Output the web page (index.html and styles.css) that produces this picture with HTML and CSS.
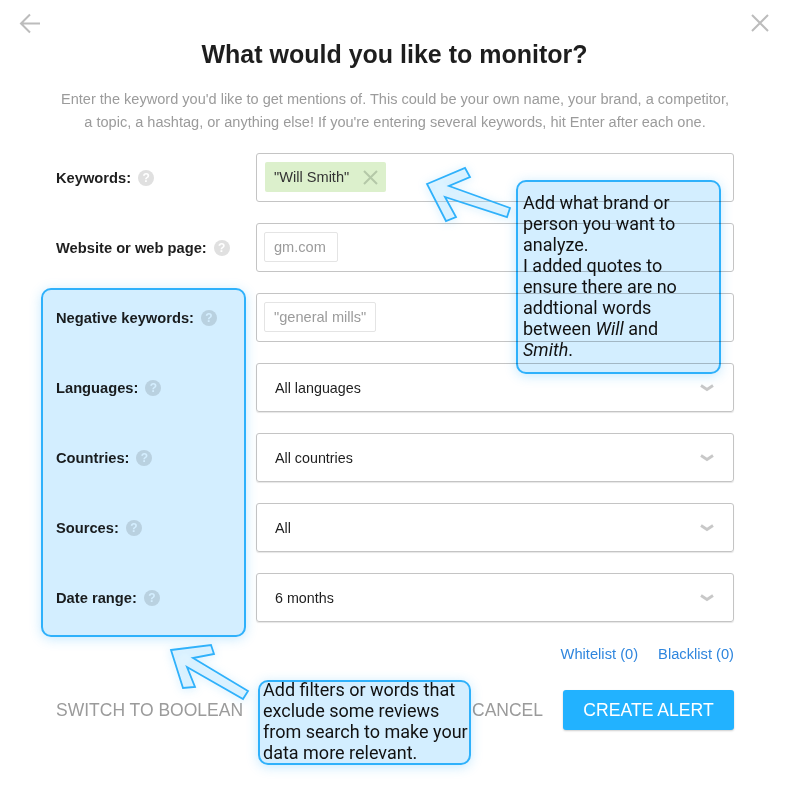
FILE: index.html
```html
<!DOCTYPE html>
<html>

<head>
    <meta charset="UTF-8">
    <title>What would you like to monitor?</title>
    <link rel="stylesheet" href="styles.css">
</head>

<body>
    <div class="page">
        <div class="top_bar">
            <svg class="icon_back" width="22" height="21" viewBox="0 0 22 21">
                <path d="M21 10.5H2M11 1.5L2 10.5L11 19.5" />
            </svg>
            <svg class="icon_close" width="18" height="18" viewBox="0 0 18 18">
                <path d="M1 1L17 17M17 1L1 17" />
            </svg>
        </div>

        <h1 class="title">What would you like to monitor?</h1>
        <p class="intro">Enter the keyword you'd like to get mentions of. This could be your own name, your brand, a competitor,<br>a topic, a hashtag, or anything else! If you're entering several keywords, hit Enter after each one.</p>

        <div class="form">
            <div class="row">
                <div class="label">Keywords: <span class="help">?</span></div>
                <div class="field">
                    <span class="chip">"Will Smith"
                        <svg class="chip_x" width="15" height="15" viewBox="0 0 15 15">
                            <path d="M1 1L14 14M14 1L1 14" />
                        </svg>
                    </span>
                </div>
            </div>
            <div class="row">
                <div class="label">Website or web page: <span class="help">?</span></div>
                <div class="field"><span class="tag">gm.com</span></div>
            </div>
            <div class="row">
                <div class="label">Negative keywords: <span class="help">?</span></div>
                <div class="field"><span class="tag">"general mills"</span></div>
            </div>
            <div class="row">
                <div class="label">Languages: <span class="help">?</span></div>
                <div class="field select">All languages
                    <svg class="chevron" width="14" height="8" viewBox="0 0 14 8"><path d="M1 1.5L7 5.5L13 1.5" /></svg>
                </div>
            </div>
            <div class="row">
                <div class="label">Countries: <span class="help">?</span></div>
                <div class="field select">All countries
                    <svg class="chevron" width="14" height="8" viewBox="0 0 14 8"><path d="M1 1.5L7 5.5L13 1.5" /></svg>
                </div>
            </div>
            <div class="row">
                <div class="label">Sources: <span class="help">?</span></div>
                <div class="field select">All
                    <svg class="chevron" width="14" height="8" viewBox="0 0 14 8"><path d="M1 1.5L7 5.5L13 1.5" /></svg>
                </div>
            </div>
            <div class="row">
                <div class="label">Date range: <span class="help">?</span></div>
                <div class="field select">6 months
                    <svg class="chevron" width="14" height="8" viewBox="0 0 14 8"><path d="M1 1.5L7 5.5L13 1.5" /></svg>
                </div>
            </div>
        </div>

        <div class="lists">
            <a class="list_link">Whitelist (0)</a>
            <a class="list_link">Blacklist (0)</a>
        </div>

        <div class="actions">
            <span class="text_button">SWITCH TO BOOLEAN</span>
            <span class="right_actions">
                <span class="text_button">CANCEL</span>
                <span class="button_create">CREATE ALERT</span>
            </span>
        </div>

        <!-- annotations drawn over the form -->
        <div class="note_panel"></div>
        <div class="note note_top">Add what brand or person you want to analyze.<br>I added quotes to ensure there are no addtional words between <i>Will</i> and <i>Smith</i>.</div>
        <div class="note note_bottom"><div class="note_bottom_text">Add filters or words that exclude some reviews from search to make your data more relevant.</div></div>
        <svg class="note_arrows" width="785" height="788" viewBox="0 0 785 788">
            <polygon points="427,184 465,168 470,177 449,186 510,208 507,217 445,197 456,217 446,221" />
            <polygon points="171,650 211,645 214,654 193,658 248,691 243,699 187,667 195,687 183,688" />
        </svg>
    </div>
</body>

</html>
```

FILE: styles.css
```css
body {
    margin: 0;
    background-color: white;
    color: #1e1e1e;
    font-family: "Liberation Sans", Arial, sans-serif;
    font-size: 14.3px;
}

.page {
    position: relative;
    width: 785px;
    height: 788px;
    overflow: hidden;
}

.top_bar {
    display: flex;
    justify-content: space-between;
    padding: 13px 16px 0 19px;
}

.icon_back path,
.icon_close path {
    fill: none;
    stroke: #bcbcbc;
    stroke-width: 2;
}

.icon_close {
    margin-top: 1px;
}

.title {
    margin: 6px 0 0;
    padding-left: 4px;
    font-size: 25px;
    line-height: 29px;
    text-align: center;
    color: #1e1e1e;
}

.intro {
    margin: 19px 0 0;
    padding-left: 5px;
    font-size: 14.55px;
    line-height: 23px;
    text-align: center;
    color: #9b9b9b;
}

.form {
    display: flex;
    flex-direction: column;
    gap: 21px;
    margin: 19px 51px 0 56px;
}

.row {
    display: flex;
    align-items: center;
}

.label {
    display: flex;
    align-items: center;
    gap: 7px;
    width: 200px;
    font-size: 14.7px;
    font-weight: bold;
}

.help {
    width: 16px;
    height: 16px;
    border-radius: 50%;
    background-color: #e0e0e0;
    color: white;
    font-size: 12px;
    line-height: 16px;
    text-align: center;
}

.field {
    display: flex;
    align-items: flex-start;
    box-sizing: border-box;
    flex: 1;
    height: 49px;
    padding: 8px 7px 0 8px;
    border: 1px solid #c4c4c4;
    border-radius: 3px;
}

.select {
    align-items: center;
    justify-content: space-between;
    padding: 0 19px 0 18px;
    box-shadow: 0 1px 1px rgba(0, 0, 0, 0.1);
}

.chevron path {
    fill: none;
    stroke: #c8c8c8;
    stroke-width: 2.8;
}

.chip {
    display: flex;
    align-items: center;
    gap: 14px;
    height: 30px;
    padding: 0 8px 0 9px;
    background-color: #dcf0cc;
    border-radius: 2px;
    color: #333;
    font-size: 14.6px;
}

.chip_x path {
    fill: none;
    stroke: #b4c8a8;
    stroke-width: 2;
}

.tag {
    box-sizing: border-box;
    min-width: 74px;
    height: 30px;
    margin-left: -1px;
    padding: 0 9px;
    border: 1px solid #e4e4e4;
    border-radius: 2px;
    font-size: 14.6px;
    line-height: 28px;
    color: #9b9b9b;
}

.lists {
    display: flex;
    justify-content: flex-end;
    gap: 20px;
    margin: 24px 51px 0 0;
    font-size: 14.7px;
    line-height: 16px;
}

.list_link {
    color: #2f86de;
}

.actions {
    display: flex;
    justify-content: space-between;
    align-items: center;
    margin: 28px 51px 0 56px;
}

.right_actions {
    display: flex;
    align-items: center;
    gap: 20px;
}

.text_button {
    font-size: 17.5px;
    color: #9b9b9b;
}

.button_create {
    width: 171px;
    height: 40px;
    background-color: #22b2ff;
    border-radius: 3px;
    box-shadow: 0 1px 2px rgba(0, 0, 0, 0.2);
    color: white;
    font-size: 17.6px;
    line-height: 40px;
    text-align: center;
}

.note_panel,
.note {
    position: absolute;
    box-sizing: border-box;
    border: 2px solid #2fb1fb;
    border-radius: 10px;
    background-color: #d3eeff;
    box-shadow: 0 2px 12px rgba(47, 177, 251, 0.28);
    mix-blend-mode: multiply;
}

.note_panel {
    left: 41px;
    top: 288px;
    width: 205px;
    height: 349px;
}

.note {
    color: #111;
    font-family: Roboto, sans-serif;
    font-size: 18px;
    line-height: 21px;
}

.note_top {
    left: 516px;
    top: 180px;
    width: 205px;
    height: 194px;
    padding: 10px 12px 0 5px;
}

.note_bottom {
    left: 258px;
    top: 680px;
    width: 213px;
    height: 85px;
    padding: 0 0 0 3px;
}

.note_bottom_text {
    margin-top: -3px;
}

.note_arrows {
    position: absolute;
    left: 0;
    top: 0;
}

.note_arrows polygon {
    fill: rgba(167, 221, 255, 0.22);
    stroke: #2fb1fb;
    stroke-width: 1.8;
    filter: drop-shadow(0 1px 4px rgba(47, 177, 251, 0.35));
}
```
